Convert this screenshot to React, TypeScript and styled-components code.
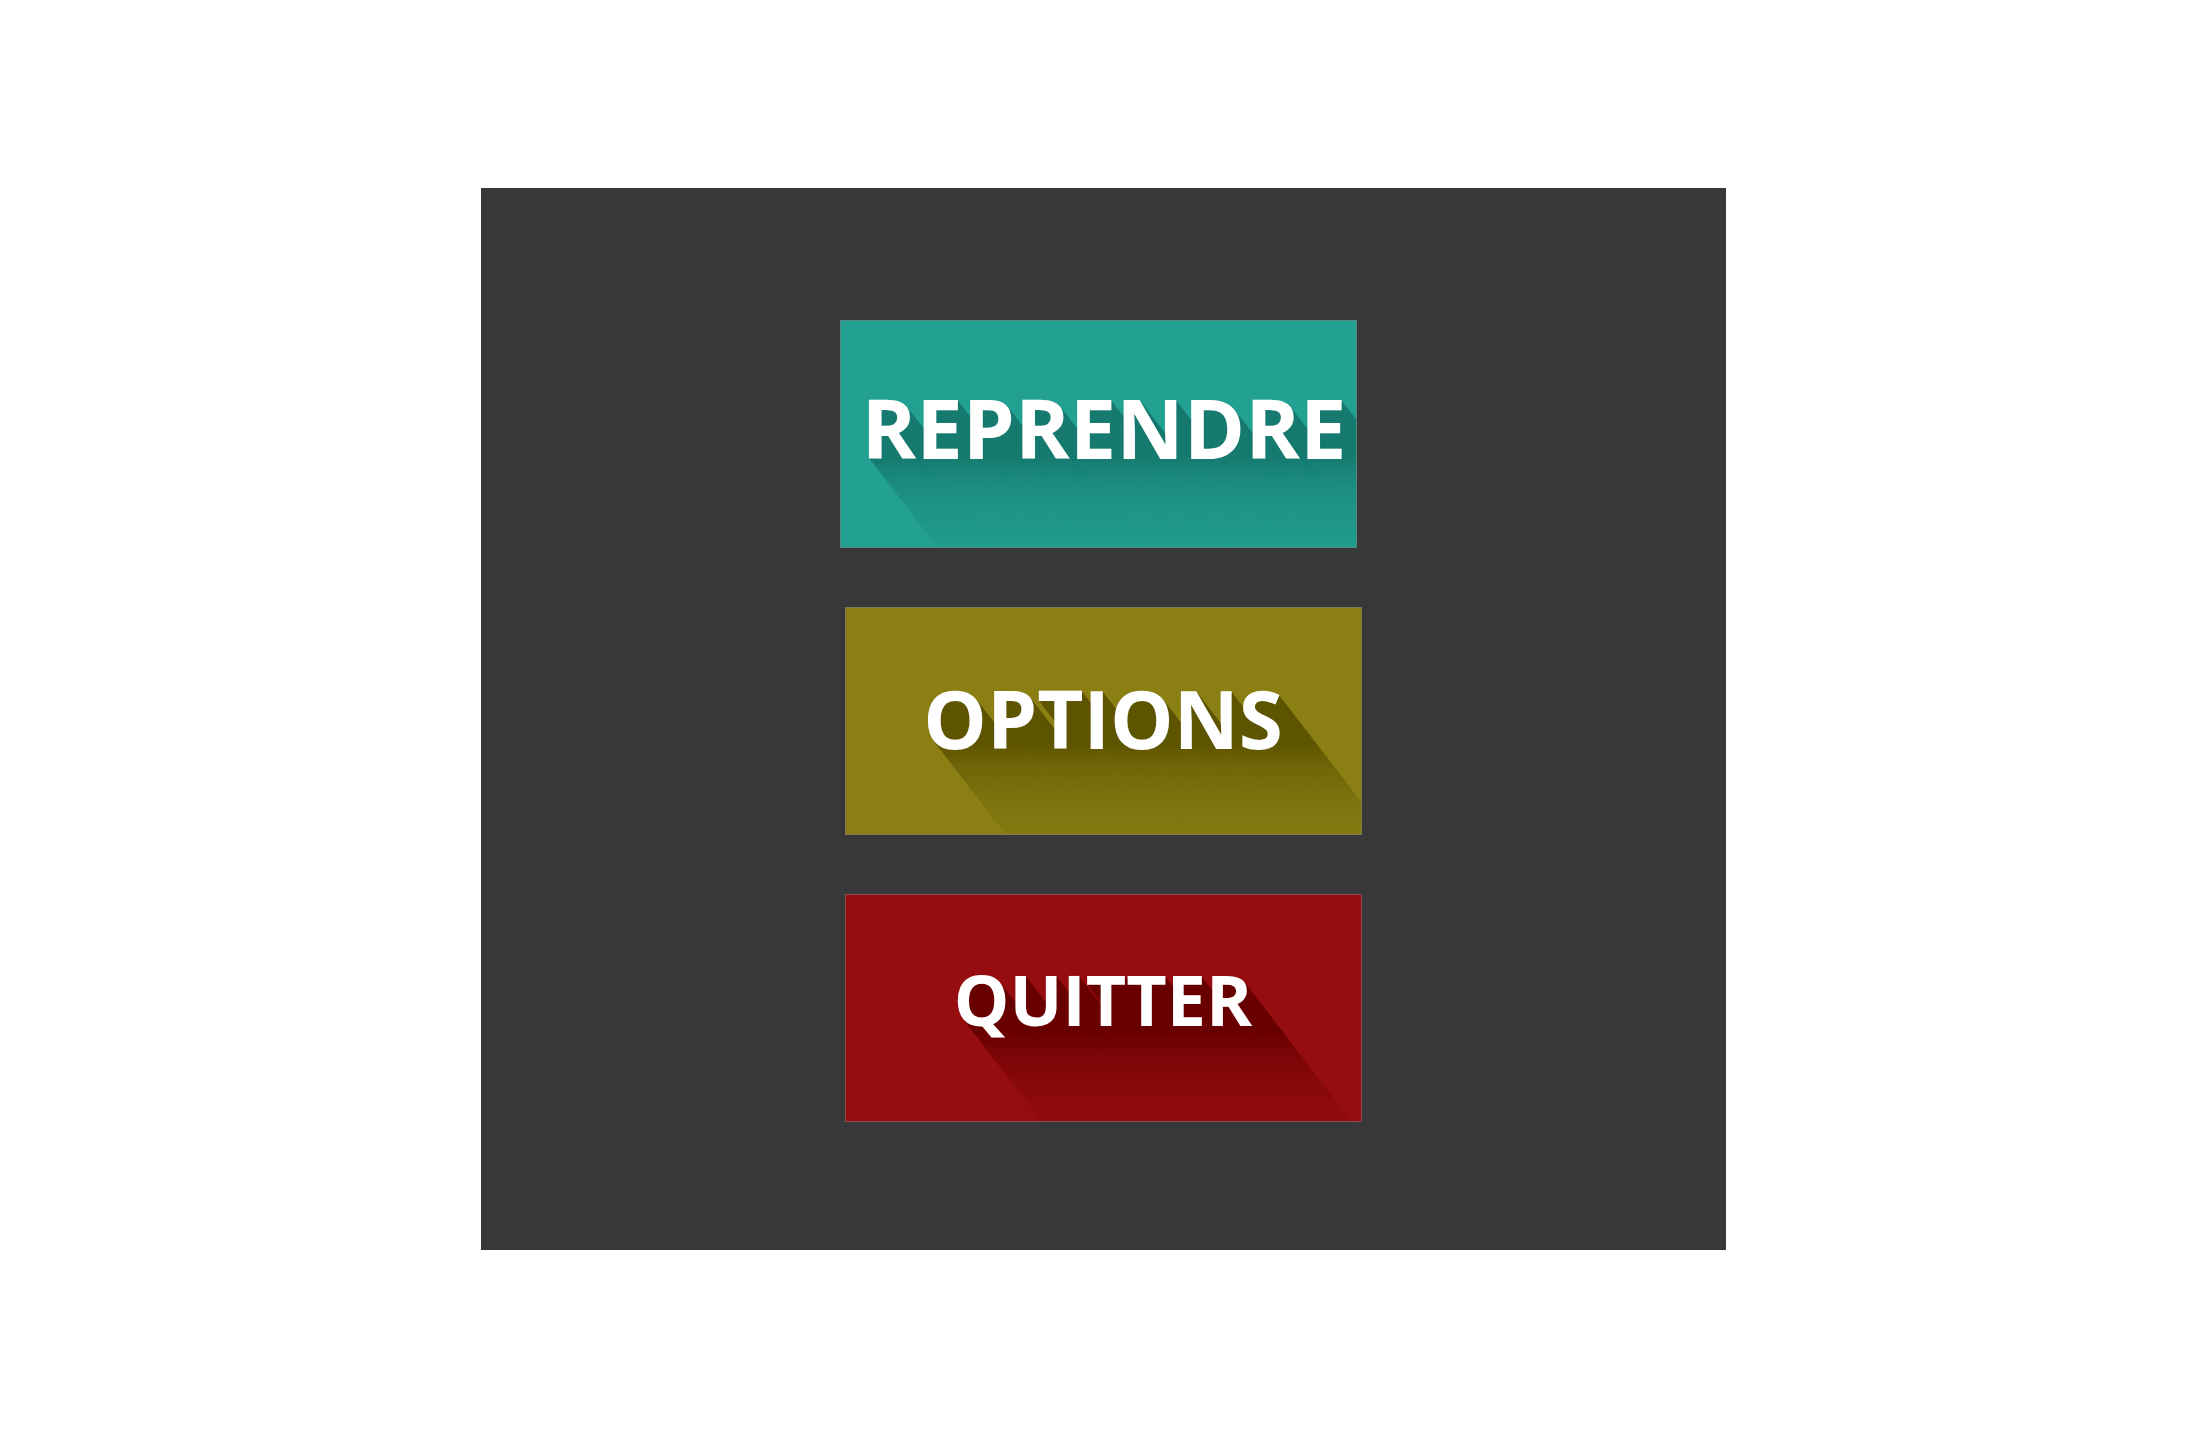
import React from "react";
import styled, { createGlobalStyle } from "styled-components";

type MenuItem = {
    label: string;
    base: string;
    shade: string;
    size: number;
    top: number;
    nudge?: boolean;
};

const items: MenuItem[] = [
    { label: "REPRENDRE", base: "#22a193", shade: "#177a6f", size: 83, top: 64, nudge: true },
    { label: "OPTIONS", base: "#8b7f14", shade: "#5e5500", size: 80, top: 70 },
    { label: "QUITTER", base: "#960d10", shade: "#690000", size: 70, top: 69 },
];

// long shadow going down-right, one step per pixel
const longShadow = (color: string) =>
    Array.from({ length: 240 }, (_, i) => `${((i + 1) * 0.77).toFixed(2)}px ${i + 1}px 0 ${color}`).join(", ");

const GlobalStyle = createGlobalStyle`
    html, body {
        margin: 0;
        padding: 0;
        background: #ffffff;
    }
`;

const Page = styled.div`
    min-height: 100vh;
    display: flex;
    align-items: center;
    justify-content: center;
`;

const Panel = styled.div`
    width: 1245px;
    height: 1062px;
    box-sizing: border-box;
    background: #383838;
    padding-top: 132px;
    display: flex;
    flex-direction: column;
    align-items: center;
    gap: 59px;
`;

const MenuButton = styled.button<{ $base: string; $nudge?: boolean }>`
    position: relative;
    width: 517px;
    height: 228px;
    box-sizing: border-box;
    padding: 0;
    margin: 0 ${({ $nudge }) => ($nudge ? "10px" : "0")} 0 0;
    border: 1px solid rgba(120, 120, 120, 0.6);
    background: ${({ $base }) => $base};
    overflow: hidden;
    cursor: pointer;
`;

const Label = styled.span<{ $size: number; $top: number; $shade: string; $nudge?: boolean }>`
    position: relative;
    z-index: 0;
    display: block;
    width: 100%;
    height: 100%;
    box-sizing: border-box;
    padding-top: ${({ $top }) => $top}px;
    padding-left: ${({ $nudge }) => ($nudge ? "12px" : "0")};
    font-family: "Open Sans", "Liberation Sans", sans-serif;
    font-weight: 700;
    font-size: ${({ $size }) => $size}px;
    line-height: 1;
    color: #ffffff;
    text-align: center;
    white-space: nowrap;

    &::before {
        content: attr(data-text);
        position: absolute;
        inset: 0;
        z-index: -1;
        padding: inherit;
        color: transparent;
        text-shadow: ${({ $shade }) => longShadow($shade)};
        -webkit-mask-image: linear-gradient(to bottom, #000 0%, #000 60%, rgba(0, 0, 0, 0.6) 70%, rgba(0, 0, 0, 0.3) 84%, rgba(0, 0, 0, 0.12) 100%);
        mask-image: linear-gradient(to bottom, #000 0%, #000 60%, rgba(0, 0, 0, 0.6) 70%, rgba(0, 0, 0, 0.3) 84%, rgba(0, 0, 0, 0.12) 100%);
    }
`;

const App = () => {
    return (
        <>
            <GlobalStyle />
            <Page>
                <Panel>
                    {items.map((item) => (
                        <MenuButton key={item.label} $base={item.base} $nudge={item.nudge}>
                            <Label
                                data-text={item.label}
                                $size={item.size}
                                $top={item.top}
                                $shade={item.shade}
                                $nudge={item.nudge}
                            >
                                {item.label}
                            </Label>
                        </MenuButton>
                    ))}
                </Panel>
            </Page>
        </>
    );
};

export default App;
